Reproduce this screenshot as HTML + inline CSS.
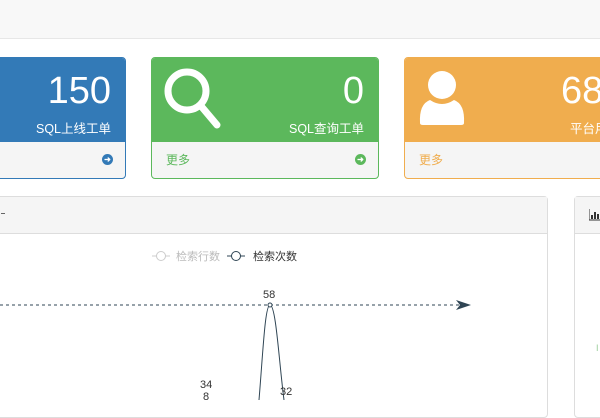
<!DOCTYPE html>
<html><head><style>
body{margin:0;width:600px;height:400px;overflow:hidden;background:#fff;font-family:"Liberation Sans","Noto Sans CJK SC",sans-serif;position:relative}
.top{position:absolute;left:0;top:0;width:600px;height:38px;background:#f8f8f8;border-bottom:1px solid #e7e7e7}
.card{position:absolute;top:57px;height:120px;border:1px solid;border-radius:4px;overflow:hidden;background:#f5f5f5}
.card .h{height:84px;position:relative;color:#fff}
.card .num{position:absolute;right:14px;top:12px;font-size:38px}
.card .lbl{position:absolute;right:14px;top:60px;font-size:12.5px}
.card .f{height:36px;position:relative;font-size:12px;line-height:36px;padding-left:14px}
.arr{position:absolute;right:12px;top:12px;width:11px;height:11px;border-radius:50%;color:#fff;font-size:8px;line-height:11px;text-align:center;font-weight:bold}
.panel{position:absolute;top:196px;height:220px;border:1px solid #ddd;border-radius:4px;background:#fff}
.panel .ph{height:36px;background:#f5f5f5;border-bottom:1px solid #ddd}
</style></head><body>
<div class="top"></div>
<div class="card" style="left:-10px;width:134px;border-color:#337ab7">
 <div class="h" style="background:#337ab7"><div class="num">150</div><div class="lbl">SQL上线工单</div></div>
 <div class="f"><span class="arr" style="background:#337ab7">➜</span></div>
</div>
<div class="card" style="left:151px;width:226px;border-color:#5cb85c">
 <div class="h" style="background:#5cb85c">
  <svg style="position:absolute;left:10px;top:8px" width="64" height="66" viewBox="0 0 64 66"><circle cx="25" cy="25" r="19" fill="none" stroke="#fff" stroke-width="7"/><line x1="39" y1="40" x2="55" y2="59" stroke="#fff" stroke-width="7" stroke-linecap="round"/></svg>
  <div class="num">0</div><div class="lbl">SQL查询工单</div></div>
 <div class="f" style="color:#5cb85c">更多<span class="arr" style="background:#5cb85c">➜</span></div>
</div>
<div class="card" style="left:404px;width:220px;border-color:#f0ad4e">
 <div class="h" style="background:#f0ad4e">
  <svg style="position:absolute;left:12px;top:10px" width="50" height="60" viewBox="0 0 50 60"><circle cx="25" cy="17" r="14" fill="#fff"/><path d="M3 55 Q2 36 13 32 Q25 40 37 32 Q48 36 47 55 Q47 57 44 57 L6 57 Q3 57 3 55Z" fill="#fff"/></svg>
  <div class="num" style="right:auto;left:156px">68</div><div class="lbl" style="right:auto;left:165px">平台用户</div></div>
 <div class="f" style="color:#f0ad4e">更多</div>
</div>
<div class="panel" style="left:-10px;width:556px"><div class="ph"><span style="position:absolute;left:10px;top:16px;width:4px;height:1px;background:#666"></span></div></div>
<div class="panel" style="left:574px;width:40px"><div class="ph">
 <svg style="position:absolute;left:14px;top:12px" width="14" height="12"><path d="M0 0V11H14" stroke="#333" fill="none"/><rect x="2" y="6" width="2" height="4" fill="#333"/><rect x="5" y="3" width="2" height="7" fill="#333"/><rect x="8" y="5" width="2" height="5" fill="#333"/><rect x="11" y="2" width="2" height="8" fill="#333"/></svg>
</div></div>
<svg style="position:absolute;left:0;top:232px" width="546" height="168">
 <g font-size="11" font-family="Liberation Sans,Noto Sans CJK SC,sans-serif">
 <line x1="152" y1="24" x2="170" y2="24" stroke="#ccc"/><circle cx="161" cy="24" r="4.5" fill="#fff" stroke="#ccc"/>
 <text x="176" y="28" fill="#bbb">检索行数</text>
 <line x1="227" y1="24" x2="245" y2="24" stroke="#2f4554"/><circle cx="236" cy="24" r="4.5" fill="#fff" stroke="#2f4554"/>
 <text x="253" y="28" fill="#333">检索次数</text>
 <line x1="0" y1="73" x2="462" y2="73" stroke="#2f4554" stroke-dasharray="3,3"/>
 <path d="M456 68 L471 73 L456 78 L460 73Z" fill="#2f4554"/>
 <path d="M259 168 C263 120 265 73 270 73 C276 73 279 130 284 168" fill="none" stroke="#2f4554"/>
 <circle cx="270" cy="73" r="2" fill="#fff" stroke="#2f4554"/>
 <text x="263" y="66" fill="#333">58</text>
 <text x="200" y="156" fill="#333">34</text>
 <text x="203" y="168" fill="#333">8</text>
 <text x="280" y="163" fill="#333">32</text>
 </g>
</svg>
<span style="position:absolute;left:596px;top:343px;font-size:9px;color:#9c9">I</span>
</body></html>
